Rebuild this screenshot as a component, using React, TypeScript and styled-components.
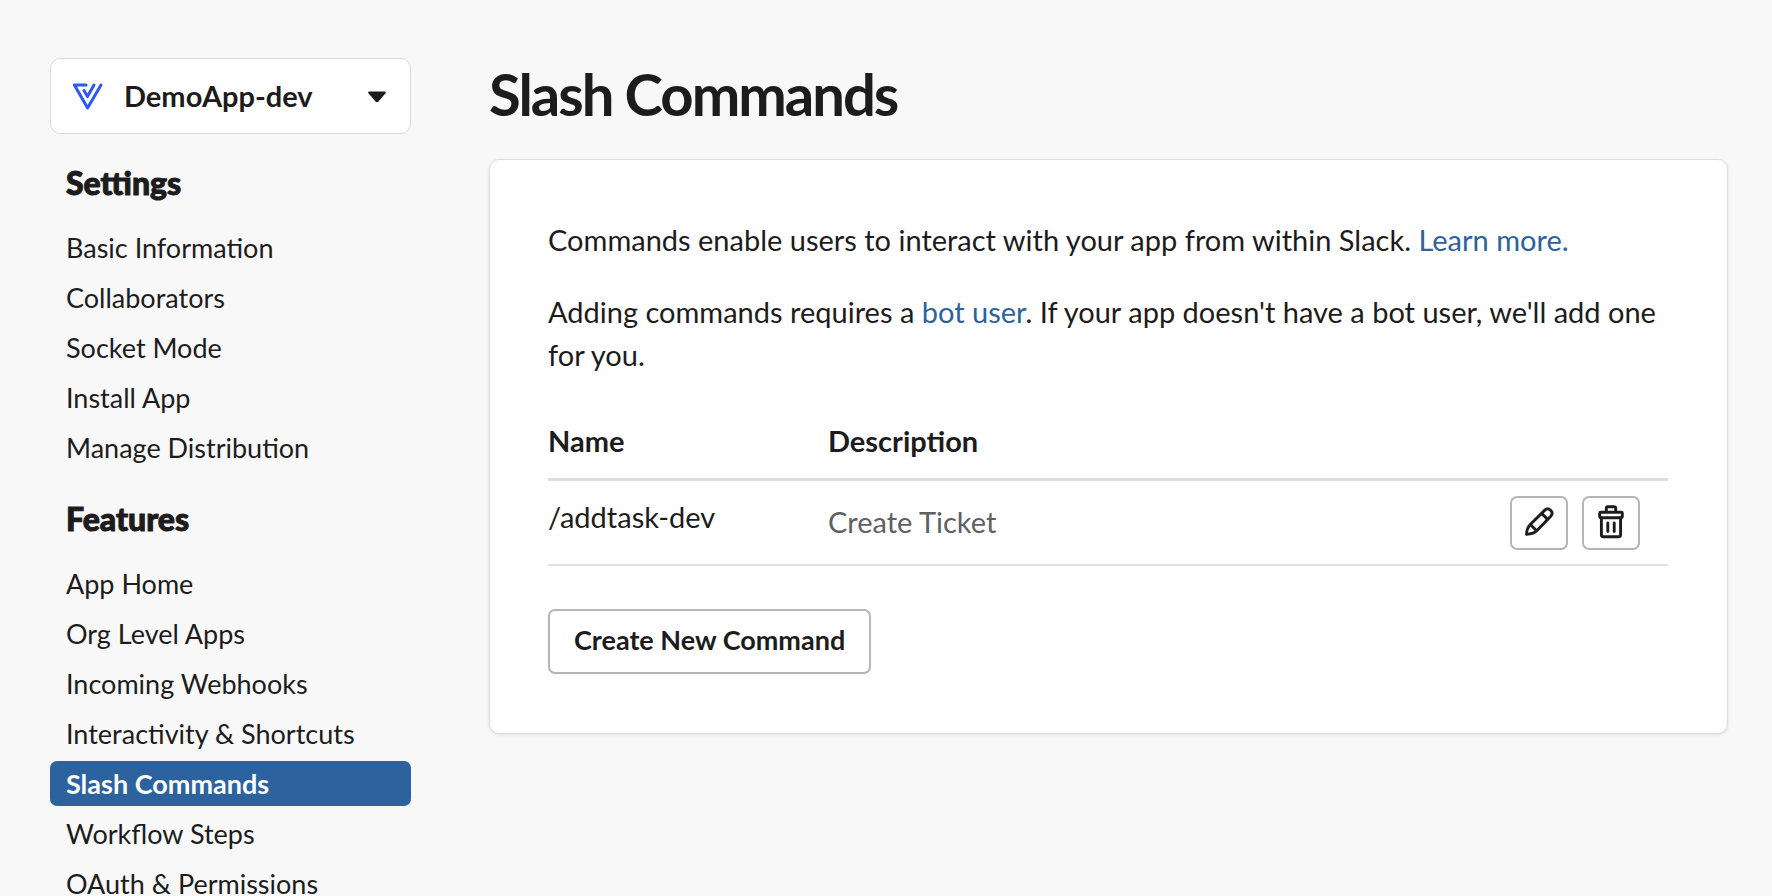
import React from "react";
import styled, { createGlobalStyle } from "styled-components";

const GlobalStyle = createGlobalStyle`
  *, *::before, *::after { box-sizing: border-box; }
  html, body, #root { height: 100%; }
  body {
    margin: 0;
    background: #f8f8f8;
    color: #1d1c1d;
    font-family: Lato, "Liberation Sans", sans-serif;
    font-size: 29px;
    line-height: 43px;
    overflow: hidden;
  }
`;

const Page = styled.div`
  display: grid;
  grid-template-columns: 361px minmax(0, 1fr);
  column-gap: 78px;
  align-items: start;
  height: 100%;
  overflow: hidden;
  padding: 58px 44px 0 50px;
`;

const Sidebar = styled.aside`
  display: flex;
  flex-direction: column;
`;

const AppPicker = styled.button`
  display: flex;
  align-items: center;
  width: 100%;
  height: 76px;
  padding: 0 24px 0 20px;
  border: 1px solid #dddddd;
  border-radius: 10px;
  background: #ffffff;
  color: #1d1c1d;
  font: bold 29px/40px Lato, "Liberation Sans", sans-serif;
`;

const AppName = styled.span`
  flex: 1;
  margin-left: 19px;
  text-align: left;
`;

const GroupTitle = styled.h2`
  margin: 27px 0 20px;
  padding-left: 16px;
  font-size: 32px;
  font-weight: 900;
  line-height: 44px;
  -webkit-text-stroke: 1px currentColor;
`;

const NavList = styled.ul`
  display: flex;
  flex-direction: column;
  gap: 5px;
  margin: 0;
  padding: 0;
  list-style: none;
`;

const NavLink = styled.a<{ $active?: boolean }>`
  display: block;
  padding-left: 16px;
  border-radius: 7px;
  background: ${(p) => (p.$active ? "#2c639e" : "transparent")};
  color: ${(p) => (p.$active ? "#ffffff" : "#1d1c1d")};
  font-size: 27px;
  font-weight: ${(p) => (p.$active ? 700 : 400)};
  line-height: 45px;
  text-decoration: none;
  white-space: nowrap;
`;

const Title = styled.h1`
  margin: 0 0 29px;
  font-size: 58px;
  font-weight: 700;
  line-height: 72px;
  letter-spacing: -2px;
`;

const Card = styled.section`
  padding: 58px 59px 59px 58px;
  border: 1px solid #dddddd;
  border-radius: 10px;
  background: #ffffff;
  box-shadow: 0 1px 3px rgba(0, 0, 0, 0.1);
`;

const Paragraph = styled.p`
  margin: 0 0 29px;
`;

const TextLink = styled.a`
  color: #2c639e;
  text-decoration: none;
`;

const CommandTable = styled.table`
  width: 100%;
  margin-top: 43px;
  border-collapse: separate;
  border-spacing: 0;
  table-layout: fixed;
`;

const HeadCell = styled.th`
  width: ${(p) => p.width};
  padding: 0 0 16px;
  border-bottom: 3px solid #dddddd;
  text-align: left;
`;

const Cell = styled.td<{ $muted?: boolean }>`
  padding: ${(p) => (p.$muted ? "14px 0 16px" : "14px 0")};
  border-bottom: 2px solid #e0e0e0;
  color: ${(p) => (p.$muted ? "#616061" : "inherit")};
  vertical-align: ${(p) => (p.$muted ? "middle" : "top")};
`;

const Actions = styled.div`
  display: flex;
  justify-content: flex-end;
  gap: 14px;
  padding: 1px 28px 0 0;
`;

const IconButton = styled.button`
  display: grid;
  place-items: center;
  width: 58px;
  height: 54px;
  padding: 0;
  border: 2px solid #b5b5b5;
  border-radius: 7px;
  background: #ffffff;
  color: #1d1c1d;
`;

const CreateButton = styled.button`
  display: block;
  height: 65px;
  margin-top: 43px;
  padding: 0 24px 4px;
  border: 2px solid #b5b5b5;
  border-radius: 7px;
  background: #ffffff;
  color: #1d1c1d;
  font: bold 27px/40px Lato, "Liberation Sans", sans-serif;
`;

const groups = [
  { title: "Settings", items: ["Basic Information", "Collaborators", "Socket Mode", "Install App", "Manage Distribution"] },
  {
    title: "Features",
    items: ["App Home", "Org Level Apps", "Incoming Webhooks", "Interactivity & Shortcuts", "Slash Commands", "Workflow Steps", "OAuth & Permissions"],
  },
];

const Logo = () => (
  <svg width="34" height="32" viewBox="0 0 34 32" fill="none" stroke="#2a57f5" strokeWidth="3" strokeLinecap="round" strokeLinejoin="round" aria-hidden="true">
    <path d="M15 5H3.400L16.600 28 30 5" />
    <path d="M13 10.500 16.500 16.500 23 5" />
  </svg>
);

const Caret = () => (
  <svg width="18" height="16" viewBox="0 0 18 16" aria-hidden="true">
    <path d="M1.400 3.600h15.200q2 0 .9 1.600l-7 8.200q-1.500 1.600-3 0L.5 5.200Q-.6 3.600 1.400 3.600Z" fill="#1d1c1d" />
  </svg>
);

const Pencil = () => (
  <svg width="32" height="32" viewBox="0 0 32 32" fill="none" stroke="currentColor" strokeWidth="2.9" strokeLinejoin="round" aria-hidden="true">
    <path d="M7.300 17.500 22.100 2.900q2.700-2.300 5.200.1l.7.700q2.300 2.600 0 5.200L13.700 23.700q-2.900 3-10.200 3.700Q3.500 21.600 7.300 17.500Z" />
    <path d="m18.600 6.400 6 6M7.300 17.500l6.400 6.200" />
  </svg>
);

const Trash = () => (
  <svg width="36" height="36" viewBox="0 0 36 36" fill="none" stroke="currentColor" strokeWidth="2.9" strokeLinejoin="round" strokeLinecap="round" aria-hidden="true">
    <path d="M13.300 6.500V3.300q0-1.600 1.600-1.600h6.200q1.600 0 1.600 1.600v3.200" />
    <rect x="6.700" y="7.200" width="22.600" height="5.600" rx="1" />
    <path d="M8.400 13v16.700q0 2 2 2h15.200q2 0 2-2V13M14.800 18v8.500M21.200 18v8.500" />
  </svg>
);

export default function App() {
  return (
    <Page>
      <GlobalStyle />
      <Sidebar>
        <AppPicker type="button" aria-haspopup="listbox">
          <Logo />
          <AppName>DemoApp-dev</AppName>
          <Caret />
        </AppPicker>
        <nav aria-label="App settings">
          {groups.map((group) => (
            <React.Fragment key={group.title}>
              <GroupTitle>{group.title}</GroupTitle>
              <NavList>
                {group.items.map((item) => (
                  <li key={item}>
                    <NavLink href="#" $active={item === "Slash Commands"}>{item}</NavLink>
                  </li>
                ))}
              </NavList>
            </React.Fragment>
          ))}
        </nav>
      </Sidebar>
      <main>
        <Title>Slash Commands</Title>
        <Card>
          <Paragraph>
            Commands enable users to interact with your app from within Slack. <TextLink href="#">Learn more.</TextLink>
          </Paragraph>
          <Paragraph>
            Adding commands requires a <TextLink href="#">bot user</TextLink>. If your app doesn't have a bot user, we'll add one for you.
          </Paragraph>
          <CommandTable>
            <thead>
              <tr>
                <HeadCell width="25%">Name</HeadCell>
                <HeadCell width="50%">Description</HeadCell>
                <HeadCell width="25%" aria-label="Actions" />
              </tr>
            </thead>
            <tbody>
              <tr>
                <Cell>/addtask-dev</Cell>
                <Cell $muted>Create Ticket</Cell>
                <Cell>
                  <Actions>
                    <IconButton type="button" aria-label="Edit command"><Pencil /></IconButton>
                    <IconButton type="button" aria-label="Delete command"><Trash /></IconButton>
                  </Actions>
                </Cell>
              </tr>
            </tbody>
          </CommandTable>
          <CreateButton type="button">Create New Command</CreateButton>
        </Card>
      </main>
    </Page>
  );
}
